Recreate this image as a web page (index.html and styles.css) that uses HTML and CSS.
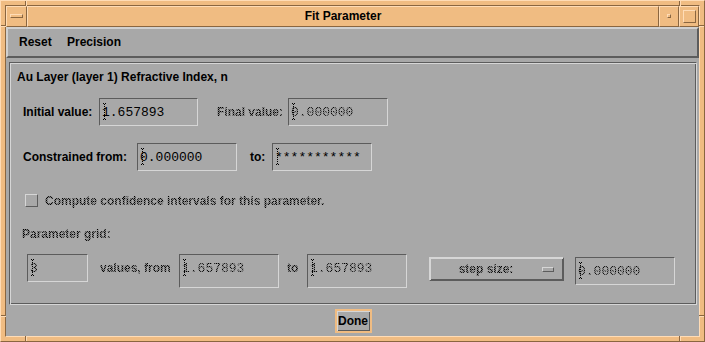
FILE: index.html
```html
<!DOCTYPE html>
<html>
<head>
<meta charset="utf-8">
<title>Fit Parameter</title>
<link rel="stylesheet" href="styles.css">
</head>
<body>
<div class="window">
  <span class="notch nv n-t1"></span>
  <span class="notch nv n-t2"></span>
  <span class="notch nv n-b1"></span>
  <span class="notch nv n-b2"></span>
  <span class="notch nh n-l1"></span>
  <span class="notch nh n-l2"></span>
  <span class="notch nh n-r1"></span>
  <span class="notch nh n-r2"></span>
  <div class="inner">
    <div class="titlebar">
      <div class="tb-btn tb-menu"><span class="menu-bar"></span></div>
      <div class="tb-title">Fit Parameter</div>
      <div class="tb-btn tb-min"><span class="sq-small"></span></div>
      <div class="tb-btn tb-max"><span class="sq-big"></span></div>
    </div>
    <div class="client">
      <div class="menubar">
        <span class="menu-item reset">Reset</span>
        <span class="menu-item">Precision</span>
      </div>
      <div class="frame">
        <div class="frame-title">Au Layer (layer 1) Refractive Index, n</div>

        <div class="row row1">
          <span class="lbl w-initial">Initial value:</span>
          <div class="tf w99"><svg class="caret" width="5" height="17" viewBox="0 0 5 17"><path d="M1 0.5h3M2.5 1v15M1 16.5h3" stroke="#000" stroke-width="1" stroke-dasharray="1 1" fill="none"/></svg><span class="tf-text">1.657893</span></div>
          <span class="lbl dim w-final">Final value:</span>
          <div class="tf w100"><svg class="caret" width="5" height="17" viewBox="0 0 5 17"><path d="M1 0.5h3M2.5 1v15M1 16.5h3" stroke="#000" stroke-width="1" stroke-dasharray="1 1" fill="none"/></svg><span class="tf-text dim">0.000000</span></div>
        </div>

        <div class="row row2">
          <span class="lbl w-constr">Constrained from:</span>
          <div class="tf w100"><svg class="caret" width="5" height="17" viewBox="0 0 5 17"><path d="M1 0.5h3M2.5 1v15M1 16.5h3" stroke="#000" stroke-width="1" stroke-dasharray="1 1" fill="none"/></svg><span class="tf-text">0.000000</span></div>
          <span class="lbl w-to">to:</span>
          <div class="tf w100"><svg class="caret" width="5" height="17" viewBox="0 0 5 17"><path d="M1 0.5h3M2.5 1v15M1 16.5h3" stroke="#000" stroke-width="1" stroke-dasharray="1 1" fill="none"/></svg><span class="tf-text">***********</span></div>
        </div>

        <div class="row row3">
          <span class="checkbox"></span>
          <span class="lbl dim check-lbl">Compute confidence intervals for this parameter.</span>
        </div>

        <div class="row row-grid-lbl">
          <span class="lbl dim">Parameter grid:</span>
        </div>

        <div class="row row4">
          <div class="tf w61 h28"><svg class="caret" width="5" height="17" viewBox="0 0 5 17"><path d="M1 0.5h3M2.5 1v15M1 16.5h3" stroke="#000" stroke-width="1" stroke-dasharray="1 1" fill="none"/></svg><span class="tf-text dim">3</span></div>
          <span class="lbl dim w-values">values, from</span>
          <div class="tf w100 tall"><svg class="caret" width="5" height="17" viewBox="0 0 5 17"><path d="M1 0.5h3M2.5 1v15M1 16.5h3" stroke="#000" stroke-width="1" stroke-dasharray="1 1" fill="none"/></svg><span class="tf-text dim">1.657893</span></div>
          <span class="lbl dim w-to2">to</span>
          <div class="tf w100 tall"><svg class="caret" width="5" height="17" viewBox="0 0 5 17"><path d="M1 0.5h3M2.5 1v15M1 16.5h3" stroke="#000" stroke-width="1" stroke-dasharray="1 1" fill="none"/></svg><span class="tf-text dim">1.657893</span></div>
          <div class="optmenu"><span class="opt-lbl dim">step size:</span><span class="opt-ind"></span></div>
          <div class="tf w100 h28 last"><svg class="caret" width="5" height="17" viewBox="0 0 5 17"><path d="M1 0.5h3M2.5 1v15M1 16.5h3" stroke="#000" stroke-width="1" stroke-dasharray="1 1" fill="none"/></svg><span class="tf-text dim">0.000000</span></div>
        </div>
      </div>
      <div class="actions">
        <button class="done">Done</button>
      </div>
    </div>
  </div>
</div>
</body>
</html>
```

FILE: styles.css
```css
* { box-sizing: border-box; }
html, body { margin: 0; padding: 0; }
body {
  background: #f0bc82;
  font-family: "Liberation Sans", Arial, sans-serif;
  font-size: 12px;
  font-weight: bold;
  color: #000;
}

.window {
  position: relative;
  width: 705px;
  height: 342px;
  background: #f0bc82;
  border: 1px solid;
  border-color: #ffdcb6 #8a6640 #8a6640 #ffdcb6;
  padding: 4px;
}

.notch { position: absolute; background: #8a6640; }
.nv { width: 1px; height: 5px; box-shadow: 1px 0 0 #ffdcb6; }
.nh { height: 1px; width: 5px; box-shadow: 0 1px 0 #ffdcb6; }
.n-t1 { top: 0; left: 24px; }
.n-t2 { top: 0; left: 678px; }
.n-b1 { bottom: 0; left: 24px; }
.n-b2 { bottom: 0; left: 678px; }
.n-l1 { left: 0; top: 24px; }
.n-l2 { left: 0; top: 314px; }
.n-r1 { right: 0; top: 24px; }
.n-r2 { right: 0; top: 314px; }

.inner {
  width: 100%;
  height: 100%;
  border: 1px solid;
  border-color: #8a6640 #ffdcb6 #ffdcb6 #8a6640;
  display: flex;
  flex-direction: column;
}

.titlebar {
  height: 21px;
  display: flex;
  flex: none;
}
.tb-btn, .tb-title {
  border: 1px solid;
  border-color: #ffdcb6 #8a6640 #8a6640 #ffdcb6;
  background: #f0bc82;
  position: relative;
}
.tb-menu { width: 21px; }
.tb-min, .tb-max { width: 20px; }
.tb-title {
  flex: 1;
  display: flex;
  align-items: center;
  justify-content: center;
  font-size: 12px;
  padding-bottom: 1px;
}
.menu-bar {
  position: absolute;
  left: 3px;
  top: 7px;
  width: 13px;
  height: 4px;
  border: 1px solid;
  border-color: #ffdcb6 #8a6640 #8a6640 #ffdcb6;
}
.sq-small {
  position: absolute;
  left: 7px;
  top: 7px;
  width: 4px;
  height: 4px;
  border: 1px solid;
  border-color: #ffdcb6 #8a6640 #8a6640 #ffdcb6;
}
.sq-big {
  position: absolute;
  left: 3px;
  top: 3px;
  width: 13px;
  height: 13px;
  border: 1px solid;
  border-color: #ffdcb6 #8a6640 #8a6640 #ffdcb6;
}

.client {
  flex: 1;
  background: #a8a8a8;
  display: flex;
  flex-direction: column;
}

.menubar {
  height: 31px;
  flex: none;
  border: 2px solid;
  border-color: #d0d0d0 #5c5c5c #5c5c5c #d0d0d0;
  display: flex;
  align-items: center;
  padding-left: 11px;
  padding-bottom: 1px;
}
.menu-item.reset { width: 48px; }

.frame {
  flex: none;
  height: 243px;
  margin: 4px 2px 0 3px;
  border: 1px solid;
  border-color: #5c5c5c #d6d6d6 #d6d6d6 #5c5c5c;
  box-shadow: inset 1px 1px 0 #d6d6d6, inset -1px -1px 0 #5c5c5c;
  display: flex;
  flex-direction: column;
  padding-top: 7px;
}

.frame-title {
  height: 14px;
  line-height: 14px;
  padding-left: 7px;
}

.row { display: flex; align-items: center; }
.row1 { margin-top: 14px; height: 28px; padding-left: 13px; }
.row2 { margin-top: 17px; height: 28px; padding-left: 13px; }
.row3 { margin-top: 23px; height: 13px; padding-left: 15px; }
.row-grid-lbl { margin-top: 20px; height: 14px; padding-left: 12px; }
.row4 { margin-top: 13px; height: 34px; padding-left: 17px; align-items: flex-start; }

.lbl { white-space: nowrap; line-height: 14px; }
.w-initial { width: 76px; }
.w-final { width: 71px; margin-left: 19px; }
.w-constr { width: 114px; }
.w-to { width: 22px; margin-left: 13px; }
.w-values { width: 79px; margin-left: 12px; margin-top: 7px; }
.w-to2 { width: 20px; margin-left: 8px; margin-top: 7px; }

.tf {
  position: relative;
  height: 28px;
  border: 1px solid;
  border-color: #5c5c5c #d6d6d6 #d6d6d6 #5c5c5c;
  display: flex;
  align-items: center;
  padding-left: 2px;
  font-family: "Liberation Mono", "Courier New", monospace;
  font-weight: normal;
  font-size: 13px;
}
.w99 { width: 99px; }
.w100 { width: 100px; }
.w61 { width: 61px; }
.h28 { height: 28px; }
.tall { height: 34px; padding-bottom: 6px; }
.last { margin-top: 3px; margin-left: 11px; }

.caret {
  position: absolute;
  left: 2px;
  top: 50%;
  margin-top: -9px;
}
.tall .caret { margin-top: -12px; }
.tf-text { white-space: pre; line-height: 17px; }

.dim {
  color: transparent;
  background: repeating-conic-gradient(#000 0 25%, #7c7c7c 0 50%) 0 0 / 2px 2px;
  -webkit-background-clip: text;
  background-clip: text;
}

.checkbox {
  width: 13px;
  height: 13px;
  border: 1px solid;
  border-color: #d6d6d6 #5c5c5c #5c5c5c #d6d6d6;
}
.check-lbl { margin-left: 7px; }

.optmenu {
  margin-top: 3px;
  margin-left: 22px;
  width: 135px;
  height: 24px;
  border: 1px solid;
  border-color: #d6d6d6 #5c5c5c #5c5c5c #d6d6d6;
  box-shadow: inset 1px 1px 0 #d6d6d6, inset -1px -1px 0 #5c5c5c;
  display: flex;
  align-items: center;
  padding-right: 9px;
}
.opt-lbl { flex: 1; text-align: center; line-height: 14px; }
.opt-ind {
  width: 12px;
  height: 5px;
  border: 1px solid;
  border-color: #d6d6d6 #5c5c5c #5c5c5c #d6d6d6;
}

.actions {
  flex: 1;
  display: flex;
  justify-content: center;
  align-items: flex-start;
  padding-top: 4px;
  padding-left: 1px;
}
.done {
  width: 37px;
  height: 24px;
  margin: 0;
  padding: 0 0 1px 0;
  background: #a8a8a8;
  border: 2px solid #f0bc82;
  box-shadow: inset 1px 1px 0 #d6d6d6, inset -1px -1px 0 #5c5c5c;
  font-family: "Liberation Sans", Arial, sans-serif;
  font-weight: bold;
  font-size: 12px;
  color: #000;
}
```
